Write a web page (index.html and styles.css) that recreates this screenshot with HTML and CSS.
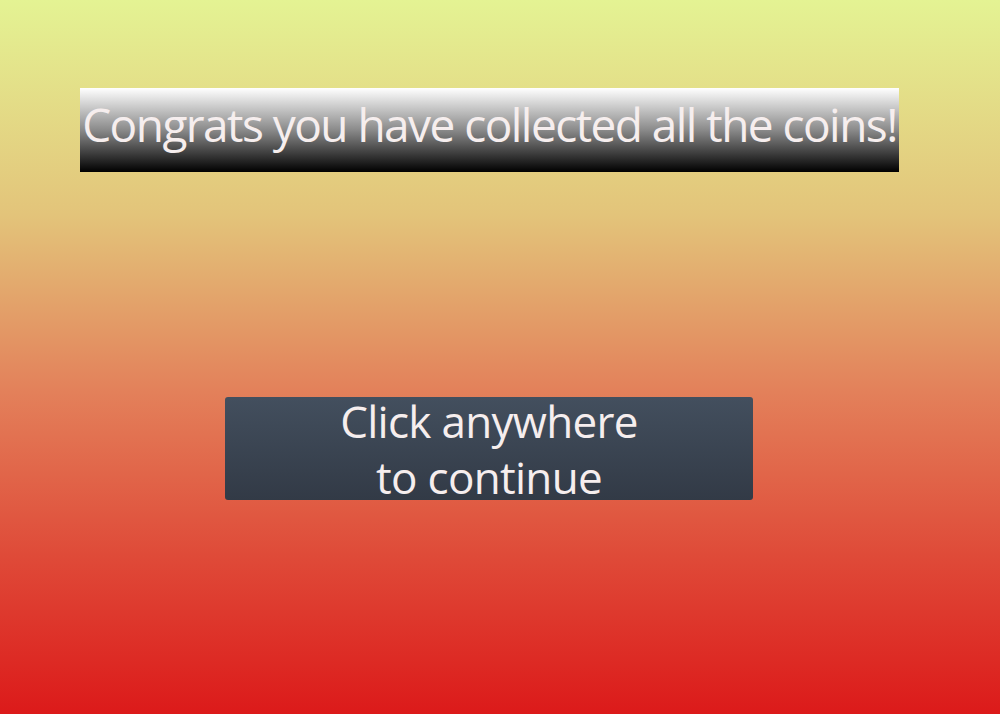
FILE: index.html
```html
<!DOCTYPE html>
<html>
<head>
<meta charset="utf-8">
<link rel="stylesheet" href="styles.css">
</head>
<body>
<main class="screen">
  <h1 class="banner">Congrats you have collected all the coins!</h1>
  <div class="continue" role="button">
    <span class="continue-text">Click anywhere<br>to continue</span>
  </div>
</main>
</body>
</html>
```
FILE: styles.css
```css
html, body {
  margin: 0;
  padding: 0;
}
.screen {
  width: 1000px;
  height: 714px;
  background: linear-gradient(to bottom, #e4f393 0%, #e3c47a 30%, #e3805a 55%, #df4a38 78%, #dc1a1a 100%);
  display: flex;
  flex-direction: column;
  align-items: flex-start;
  font-family: "Open Sans", "Noto Sans", sans-serif;
  overflow: hidden;
}
.banner {
  margin: 88px 0 0 80px;
  width: 819px;
  height: 84px;
  box-sizing: border-box;
  background: linear-gradient(to bottom, #ffffff 0%, #8a8a8a 50%, #000000 100%);
  color: #f6eeee;
  font-weight: 400;
  font-size: 46px;
  letter-spacing: -1.55px;
  display: flex;
  align-items: center;
  justify-content: center;
  white-space: nowrap;
  padding-bottom: 12px;
}
.continue {
  margin: 225px 0 0 225px;
  width: 528px;
  height: 103px;
  border-radius: 3px;
  background: linear-gradient(to bottom, #434f5e, #323a46);
  display: flex;
  align-items: center;
  justify-content: center;
  cursor: pointer;
}
.continue-text {
  color: #f6eeee;
  font-size: 44px;
  line-height: 56px;
  letter-spacing: -0.7px;
  text-align: center;
  white-space: nowrap;
}
```
